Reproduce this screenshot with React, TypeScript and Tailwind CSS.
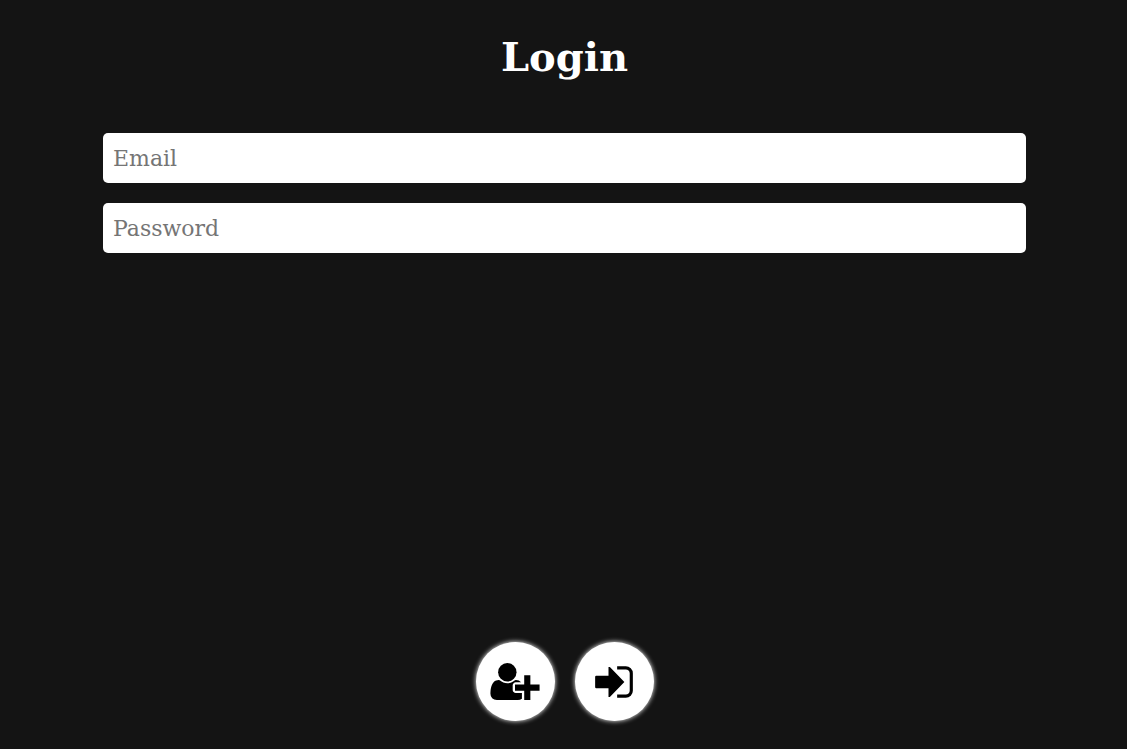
import type { ReactNode } from "react";

function UserPlusIcon() {
  return (
    <svg viewBox="0 0 2048 1792" className="h-[43px] w-[50px] shrink-0" fill="currentColor" aria-hidden="true">
      <path d="M704 896q-159 0-271.5-112.5t-112.5-271.5 112.5-271.5 271.5-112.5 271.5 112.5 112.5 271.5-112.5 271.5-271.5 112.5z" />
      <path d="M1664 1024h384v256h-384v384h-256v-384h-384v-256h384v-384h256z" />
      <path d="M928 1248q0 52 38 90t90 38h256v238q-68 50-171 50h-874q-121 0-194-69t-73-190q0-53 3.5-103.5t14-109 26.5-108.5 43-97.5 62-81 85.5-53.5 111.5-20q19 0 39 17 79 61 154.5 91.5t164.5 30.5 164.5-30.5 154.5-91.5q20-17 39-17 132 0 217 96h-223q-52 0-90 38t-38 90v192z" />
    </svg>
  );
}

function SignInIcon() {
  return (
    <svg viewBox="0 0 1536 1792" className="h-[44px] w-[38px] shrink-0" fill="currentColor" aria-hidden="true">
      <path d="M1190 896l-590 608h-56v-352h-512l-32-32v-448l32-32h512v-352h56z" />
      <path d="M1536 544v704q0 119-84.5 203.5t-203.5 84.5h-352v-128h352q66 0 113-47t47-113v-704q0-66-47-113t-113-47h-352v-128h352q119 0 203.5 84.5t84.5 203.5z" />
    </svg>
  );
}

function RoundButton({ label, type, children }: { label: string; type: "button" | "submit"; children: ReactNode }) {
  return (
    <button
      type={type}
      aria-label={label}
      className="flex size-[79px] cursor-pointer items-center justify-center rounded-full bg-white pr-px text-black shadow-[0_0_5px_#ffffff]"
    >
      {children}
    </button>
  );
}

function Field({ label, type }: { label: string; type: string }) {
  return (
    <input
      type={type}
      aria-label={label}
      placeholder={label}
      className="h-[50px] w-full rounded-[5px] bg-white px-[10px] text-[22px] text-black placeholder:text-[#757575]"
    />
  );
}

export default function App() {
  return (
    <form
      onSubmit={(event) => event.preventDefault()}
      className="flex min-h-screen flex-col bg-[#141414] pb-7 font-['Rockwell','DejaVu_Serif',serif]"
    >
      <main className="flex flex-1 flex-col gap-5 pr-[101px] pl-[103px] pt-8">
        <h1 className="mb-8 text-center text-[40px] leading-[49px] font-bold text-white">Login</h1>
        <Field label="Email" type="email" />
        <Field label="Password" type="password" />
      </main>
      <footer className="flex justify-center gap-5 pl-[3px]">
        <RoundButton label="Create account" type="button">
          <UserPlusIcon />
        </RoundButton>
        <RoundButton label="Sign in" type="submit">
          <SignInIcon />
        </RoundButton>
      </footer>
    </form>
  );
}
